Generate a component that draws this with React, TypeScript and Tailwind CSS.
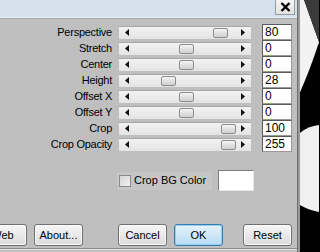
import React from "react";

const rows: { label: string; value: string; thumb: number }[] = [
  { label: "Perspective", value: "80", thumb: 94 },
  { label: "Stretch", value: "0", thumb: 60 },
  { label: "Center", value: "0", thumb: 60 },
  { label: "Height", value: "28", thumb: 42 },
  { label: "Offset X", value: "0", thumb: 60 },
  { label: "Offset Y", value: "0", thumb: 60 },
  { label: "Crop", value: "100", thumb: 102 },
  { label: "Crop Opacity", value: "255", thumb: 102 },
];

function LeftArrow() {
  return (
    <svg width="4" height="7" viewBox="0 0 4 7" className="shrink-0">
      <polygon points="4,0 4,7 0,3.5" fill="#111" />
    </svg>
  );
}
function RightArrow() {
  return (
    <svg width="4" height="7" viewBox="0 0 4 7" className="shrink-0">
      <polygon points="0,0 0,7 4,3.5" fill="#111" />
    </svg>
  );
}

function Btn({ children, primary }: { children: React.ReactNode; primary?: boolean }) {
  return (
    <div
      className={
        "w-[49px] h-[22px] shrink-0 rounded-[3px] border flex items-center justify-center text-[11px] text-black " +
        (primary
          ? "border-[#3d7bad] bg-gradient-to-b from-[#e6f3fc] to-[#b6dcf5] shadow-[inset_0_0_0_1px_#8ed0f5]"
          : "border-[#707070] bg-gradient-to-b from-[#f6f6f6] to-[#dcdcdc] shadow-[inset_0_0_0_1px_#fbfbfb]")
      }
    >
      {children}
    </div>
  );
}

export default function App() {
  return (
    <div
      className="w-[320px] h-[252px] overflow-hidden flex bg-black"
      style={{ fontFamily: '"Liberation Sans", Arial, sans-serif' }}
    >
      <div className="w-[298px] h-[252px] shrink-0 flex flex-col bg-[#bfbfbf] border-r border-[#6e6e6e]">
        {/* title bar */}
        <div className="h-[17px] shrink-0 bg-[#d5e1ec] flex justify-end pr-[1px]">
          <div className="w-[20px] h-[15px] mr-[1px] bg-gradient-to-b from-[#f6f6f6] to-[#e2e2e2] border border-[#9a9a9a] border-t-0 flex items-center justify-center">
            <svg width="11" height="10" viewBox="0 0 11 10">
              <path d="M1.5 1 L9.5 9 M9.5 1 L1.5 9" stroke="#000" strokeWidth="2.4" />
            </svg>
          </div>
        </div>
        <div className="h-[2px] shrink-0 bg-[#e9eef3] border-b border-[#a8a8a8]" />
        {/* rows */}
        <div className="flex flex-col pt-[5px] text-[11px] tracking-[-0.25px] text-black">
          {rows.map((r) => (
            <div key={r.label} className="h-[16px] flex items-center">
              <div className="w-[112px] text-right leading-none">{r.label}</div>
              <div className="ml-[7px] w-[132px] h-[13px] relative flex items-center justify-between px-[6px] bg-gradient-to-b from-[#f3f3f3] to-[#e3e3e3] border-t border-[#a8a8a8]">
                <LeftArrow />
                <RightArrow />
                <div
                  className="absolute top-[1px] w-[15px] h-[10px] rounded-[2px] border border-[#8c8c8c] bg-gradient-to-b from-[#f4f4f4] to-[#cfcfcf]"
                  style={{ left: r.thumb }}
                />
              </div>
              <div className="ml-[11px] w-[30px] h-[16px] bg-white border border-[#5a5a5a] border-b-[#9a9a9a] border-r-[#9a9a9a] text-[12px] leading-[14px] pl-[2px] tracking-normal">
                {r.value}
              </div>
            </div>
          ))}
        </div>
        {/* checkbox row */}
        <div className="mt-[18px] h-[21px] flex items-center text-[11px] text-black">
          <div className="ml-[117px] w-[95px] h-[18px] bg-[#c6c6c6] flex items-center">
            <div className="ml-[2px] w-[12px] h-[12px] border border-[#8a8a8a] bg-gradient-to-br from-[#d4d4d4] to-[#f2f2f2]" />
            <span className="ml-[3px]">Crop BG Color</span>
          </div>
          <div className="ml-[6px] w-[36px] h-[21px] bg-white border border-[#7c7c7c] border-b-[#e8e8e8] border-r-[#e8e8e8]" />
        </div>
        {/* buttons */}
        <div className="mt-[33px] h-[22px] flex text-[11px]">
          <div className="ml-[-22px]">
            <Btn>Web</Btn>
          </div>
          <div className="ml-[7px]">
            <Btn>About...</Btn>
          </div>
          <div className="ml-[35px]">
            <Btn>Cancel</Btn>
          </div>
          <div className="ml-[7px]">
            <Btn primary>OK</Btn>
          </div>
          <div className="ml-[20px]">
            <Btn>Reset</Btn>
          </div>
        </div>
        <div className="mt-[2px] h-[2px] bg-[#e6e6e6] border-t border-[#8c8c8c]" />
      </div>
      {/* background picture */}
      <svg width="21" height="252" viewBox="0 0 21 252" className="shrink-0">
        <rect x="0" y="0" width="21" height="252" fill="#000" />
        <rect x="0" y="0" width="2" height="252" fill="#9a9a9a" />
        <polygon points="2,0 6,0 21,45 21,40 2,92" fill="#f2f2f2" />
        <path d="M2 0 L6 0 L21 42 Q12 70 2 92 Z" fill="#f2f2f2" />
        <polygon points="6,0 21,0 21,42" fill="#3a3a3a" />
        <path d="M2 133 Q10 126 21 125 L21 212 Q10 210 2 205 Z" fill="#f0f0f0" />
      </svg>
    </div>
  );
}
